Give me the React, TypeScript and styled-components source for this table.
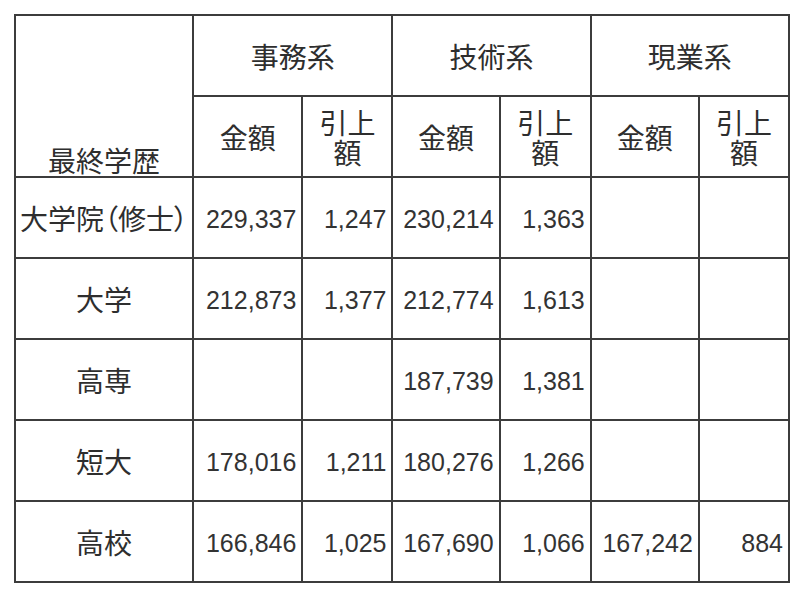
import React from "react";
import styled, { createGlobalStyle } from "styled-components";

const Global = createGlobalStyle`
  html, body { margin: 0; padding: 0; background: #ffffff; }
  body { font-family: "Noto Sans CJK JP", "Liberation Sans", sans-serif; color: #2b2b2b; }
`;

const Page = styled.div`
  padding: 14px 0 0 14px;
`;

const Table = styled.table`
  border-collapse: collapse;
  table-layout: fixed;
  width: 776px;
`;

const Row = styled.tr`
  height: 81px;
`;

const Cell = styled.td<{ $valign?: "top" | "middle" | "bottom" }>`
  border: 2px solid #3c3c3c;
  padding: 0 2px;
  text-align: center;
  vertical-align: ${(p) => p.$valign ?? "middle"};
  font-size: 28px;
  line-height: 30px;
  color: #2e2e2e;
  white-space: nowrap;
  overflow: visible;
`;

const HeadCell = styled(Cell)`
  white-space: normal;
`;

const CornerLabel = styled.div`
  line-height: 30px;
  margin-bottom: 1px;
`;

const LabelCell = styled(Cell)<{ $palt?: boolean }>`
  padding: 0;
  font-feature-settings: ${(p) => (p.$palt ? '"palt"' : "normal")};
`;

const NumCell = styled(Cell)`
  font-family: "Liberation Sans", Arial, sans-serif;
  font-size: 25px;
  padding: 2px 5px 0 2px;
  text-align: right;
  color: #333333;
`;

type Data = { label: string; vals: (string | null)[] };

const rows: Data[] = [
  { label: "大学院（修士）", vals: ["229,337", "1,247", "230,214", "1,363", null, null] },
  { label: "大学", vals: ["212,873", "1,377", "212,774", "1,613", null, null] },
  { label: "高専", vals: [null, null, "187,739", "1,381", null, null] },
  { label: "短大", vals: ["178,016", "1,211", "180,276", "1,266", null, null] },
  { label: "高校", vals: ["166,846", "1,025", "167,690", "1,066", "167,242", "884"] },
];

const widths = [178, 109, 90, 107, 91, 108, 90];

export default function App() {
  return (
    <>
      <Global />
      <Page>
        <Table>
          <colgroup>
            {widths.map((w, i) => (
              <col key={i} style={{ width: w }} />
            ))}
          </colgroup>
          <thead>
            <Row>
              <Cell rowSpan={2} $valign="bottom">
                <CornerLabel>最終学歴</CornerLabel>
              </Cell>
              <Cell colSpan={2}>事務系</Cell>
              <Cell colSpan={2}>技術系</Cell>
              <Cell colSpan={2}>現業系</Cell>
            </Row>
            <Row>
              {[0, 1, 2].map((i) => (
                <React.Fragment key={i}>
                  <Cell>金額</Cell>
                  <HeadCell>
                    引上
                    <br />
                    額
                  </HeadCell>
                </React.Fragment>
              ))}
            </Row>
          </thead>
          <tbody>
            {rows.map((r) => (
              <Row key={r.label}>
                <LabelCell $palt={r.label.length > 4}>{r.label}</LabelCell>
                {r.vals.map((v, i) => (
                  <NumCell key={i}>{v ?? ""}</NumCell>
                ))}
              </Row>
            ))}
          </tbody>
        </Table>
      </Page>
    </>
  );
}
